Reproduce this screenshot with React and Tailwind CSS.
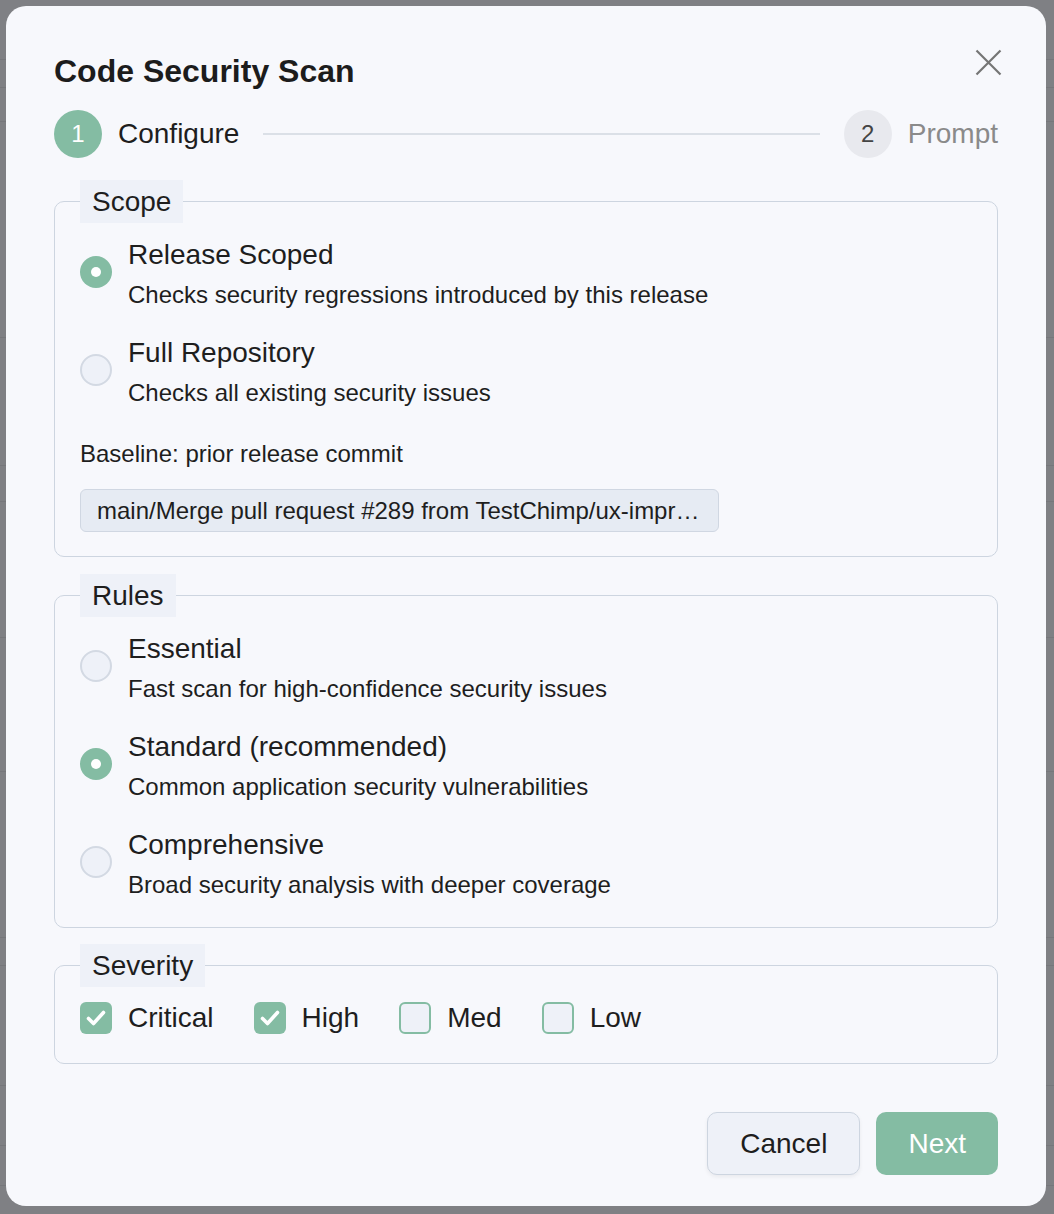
import React, { useState } from 'react';

const GREEN = 'bg-[#84bca3]';

const Radio = ({ checked }) =>
  checked ? (
    <span className={`mt-[19px] flex h-8 w-8 shrink-0 items-center justify-center rounded-full ${GREEN}`}>
      <span className="h-[10px] w-[10px] rounded-full bg-white"></span>
    </span>
  ) : (
    <span className="mt-[19px] h-8 w-8 shrink-0 rounded-full border-2 border-[#d3d9e3] bg-[#eef1f8]"></span>
  );

const Checkbox = ({ checked }) =>
  checked ? (
    <span className={`flex h-8 w-8 shrink-0 items-center justify-center rounded-[6px] ${GREEN}`}>
      <svg width="26" height="26" viewBox="0 0 26 26" fill="none">
        <path d="M5.5 13.5l5 5 10-11" stroke="white" strokeWidth="3.6" strokeLinecap="round" strokeLinejoin="round" />
      </svg>
    </span>
  ) : (
    <span className="h-8 w-8 shrink-0 rounded-[6px] border-2 border-[#84bca3] bg-[#eef1f8]"></span>
  );

const Option = ({ title, desc, checked, onClick }) => (
  <button type="button" onClick={onClick} className="flex items-start gap-4 text-left cursor-pointer">
    <Radio checked={checked} />
    <div>
      <div className="text-[28px] leading-[36px] text-[#1e1e1e]">{title}</div>
      <div className="mt-[4px] text-[24px] leading-[36px] text-[#1e1e1e]">{desc}</div>
    </div>
  </button>
);

const Section = ({ legend, className = '', children }) => (
  <fieldset className={`rounded-[10px] border-[1.5px] border-[#cdd5e0] px-[25px] pt-[14px] pb-6 ${className}`}>
    <legend className="bg-[#eef1f8] px-3 text-[28px] leading-[43px] text-[#1e1e1e]">{legend}</legend>
    {children}
  </fieldset>
);

// faint rows of the page behind the dialog
const bgRows = [60, 28, 34, 216, 128, 36, 136, 134, 166, 28, 120, 60, 40];

const App = () => {
  const [scope, setScope] = useState('release');
  const [rules, setRules] = useState('standard');
  const [severity, setSeverity] = useState({ Critical: true, High: true, Med: false, Low: false });

  const toggle = (key) => setSeverity({ ...severity, [key]: !severity[key] });

  return (
    <div className="relative h-[1214px] w-full overflow-hidden bg-[#7f8084] font-['Liberation_Sans',Arial,sans-serif]">
      <div className="flex flex-col">
        {bgRows.map((h, i) => (
          <div key={i} className="border-b border-[#76777b]" style={{ height: h }}></div>
        ))}
      </div>

      {/* Dialog */}
      <div className="absolute left-[6px] top-[6px] flex h-[1200px] w-[1040px] flex-col rounded-[20px] bg-[#f7f8fc] px-12 pt-[45px]">
        <div className="flex items-start justify-between">
          <h2 className="text-[32px] font-bold leading-10 text-[#1c1c1c]">Code Security Scan</h2>
          <button type="button" className="mt-[-2px] mr-[-4px] cursor-pointer p-0">
            <svg width="27" height="27" viewBox="0 0 27 27" fill="none">
              <path d="M1.5 1.5l24 24M25.5 1.5l-24 24" stroke="#757575" strokeWidth="2.2" />
            </svg>
          </button>
        </div>

        {/* Stepper */}
        <div className="mt-[19px] flex items-center">
          <div className={`flex h-12 w-12 items-center justify-center rounded-full ${GREEN} text-[24px] text-white`}>1</div>
          <span className="ml-4 text-[28px] text-[#1e1e1e]">Configure</span>
          <div className="mx-6 h-[2px] flex-1 bg-[#dbe0e7]"></div>
          <div className="flex h-12 w-12 items-center justify-center rounded-full bg-[#e8e9ee] text-[24px] text-[#444]">2</div>
          <span className="ml-4 text-[28px] text-[#8a8a8a]">Prompt</span>
        </div>

        {/* Scope */}
        <Section legend="Scope" className="mt-[22px]">
          <div className="flex flex-col gap-[22px]">
            <Option
              title="Release Scoped"
              desc="Checks security regressions introduced by this release"
              checked={scope === 'release'}
              onClick={() => setScope('release')}
            />
            <Option
              title="Full Repository"
              desc="Checks all existing security issues"
              checked={scope === 'full'}
              onClick={() => setScope('full')}
            />
          </div>
          <p className="mt-[28px] text-[24px] leading-[30px] text-[#1e1e1e]">Baseline: prior release commit</p>
          <div className="mt-[20px] h-[43px] w-[639px] truncate rounded-md border border-[#d0d7e2] bg-[#e6ebf3] px-4 text-[24px] leading-[41px] text-[#1e1e1e]">
            main/Merge pull request #289 from TestChimp/ux-improvements
          </div>
        </Section>

        {/* Rules */}
        <Section legend="Rules" className="mt-[17px]">
          <div className="flex flex-col gap-[22px]">
            <Option
              title="Essential"
              desc="Fast scan for high-confidence security issues"
              checked={rules === 'essential'}
              onClick={() => setRules('essential')}
            />
            <Option
              title="Standard (recommended)"
              desc="Common application security vulnerabilities"
              checked={rules === 'standard'}
              onClick={() => setRules('standard')}
            />
            <Option
              title="Comprehensive"
              desc="Broad security analysis with deeper coverage"
              checked={rules === 'comprehensive'}
              onClick={() => setRules('comprehensive')}
            />
          </div>
        </Section>

        {/* Severity */}
        <Section legend="Severity" className="mt-4 !pb-[28px]">
          <div className="flex items-center gap-10">
            {Object.keys(severity).map((key) => (
              <button key={key} type="button" onClick={() => toggle(key)} className="flex cursor-pointer items-center gap-4">
                <Checkbox checked={severity[key]} />
                <span className="text-[28px] leading-[34px] text-[#1e1e1e]">{key}</span>
              </button>
            ))}
          </div>
        </Section>

        {/* Buttons */}
        <div className="mt-[48px] flex justify-end gap-4">
          <button
            type="button"
            className="h-[63px] cursor-pointer rounded-[10px] border-[1.5px] border-[#cdd5e0] bg-[#eef1f8] px-8 text-[28px] text-[#1e1e1e] shadow-[0_2px_4px_rgba(0,0,0,0.06)]"
          >
            Cancel
          </button>
          <button type="button" className={`h-[63px] cursor-pointer rounded-[10px] ${GREEN} px-8 text-[28px] text-white`}>
            Next
          </button>
        </div>
      </div>
    </div>
  );
};

export default App;
